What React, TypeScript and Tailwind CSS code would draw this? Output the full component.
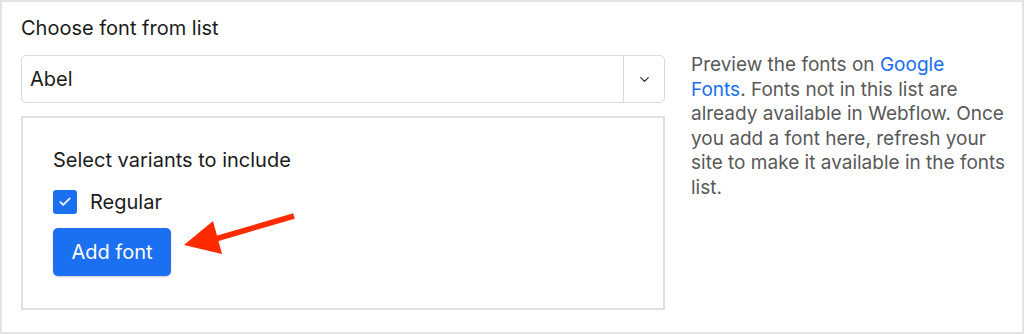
import { ChevronDown, Check } from "lucide-react";

export default function App() {
  return (
    <div
      className="relative w-[1024px] h-[334px] border-2 border-[#e3e3e3] bg-white text-[20px] text-[#1b1b1b] overflow-hidden"
      style={{ fontFamily: "Inter, 'Noto Sans', sans-serif" }}
    >
      <div className="flex gap-[26px] pl-[19px] pt-[14px]">
        {/* Left column */}
        <div className="w-[644px] shrink-0">
          <div className="leading-[24px]">Choose font from list</div>

          <div className="mt-[15px] flex h-[48px] items-stretch rounded-[5px] border border-[#dadada]">
            <div className="flex flex-1 items-center pl-[8px] leading-none">Abel</div>
            <div className="flex w-[41px] items-center justify-center border-l border-[#dadada]">
              <ChevronDown className="size-[15px] text-[#333]" strokeWidth={2} />
            </div>
          </div>

          <div className="mt-[13px] h-[194px] border-2 border-[#e0e0e0] pl-[30px] pt-[30px]">
            <div className="leading-[24px]">Select variants to include</div>
            <label className="mt-[18px] flex items-center gap-[13px] leading-[24px]">
              <span className="flex size-[24px] items-center justify-center rounded-[3px] bg-[#1a70f0]">
                <Check className="size-[14px] text-white" strokeWidth={3} />
              </span>
              Regular
            </label>
            <button className="mt-[14px] h-[48px] w-[118px] rounded-[5px] bg-[#1a70f0] text-[20px] text-white shadow-[0_1px_2px_rgba(0,0,0,0.2)]">
              Add font
            </button>
          </div>
        </div>

        {/* Right column */}
        <p className="mt-[37px] w-[320px] text-[19px] leading-[24.5px] text-[#595959]">
          Preview the fonts on <span className="text-[#1a6ef0]">Google</span>
          <br />
          <span className="text-[#1a6ef0]">Fonts</span>. Fonts not in this list are
          <br />
          already available in Webflow. Once
          <br />
          you add a font here, refresh your
          <br />
          site to make it available in the fonts
          <br />
          list.
        </p>
      </div>

      {/* Annotation arrow */}
      <svg
        className="pointer-events-none absolute left-0 top-0"
        width="1024"
        height="334"
        viewBox="0 0 1024 334"
      >
        <line x1="292" y1="214" x2="210" y2="238" stroke="#ff2a00" strokeWidth="5.5" />
        <polygon points="182,243 211,219 220,252" fill="#ff2a00" />
      </svg>
    </div>
  );
}
